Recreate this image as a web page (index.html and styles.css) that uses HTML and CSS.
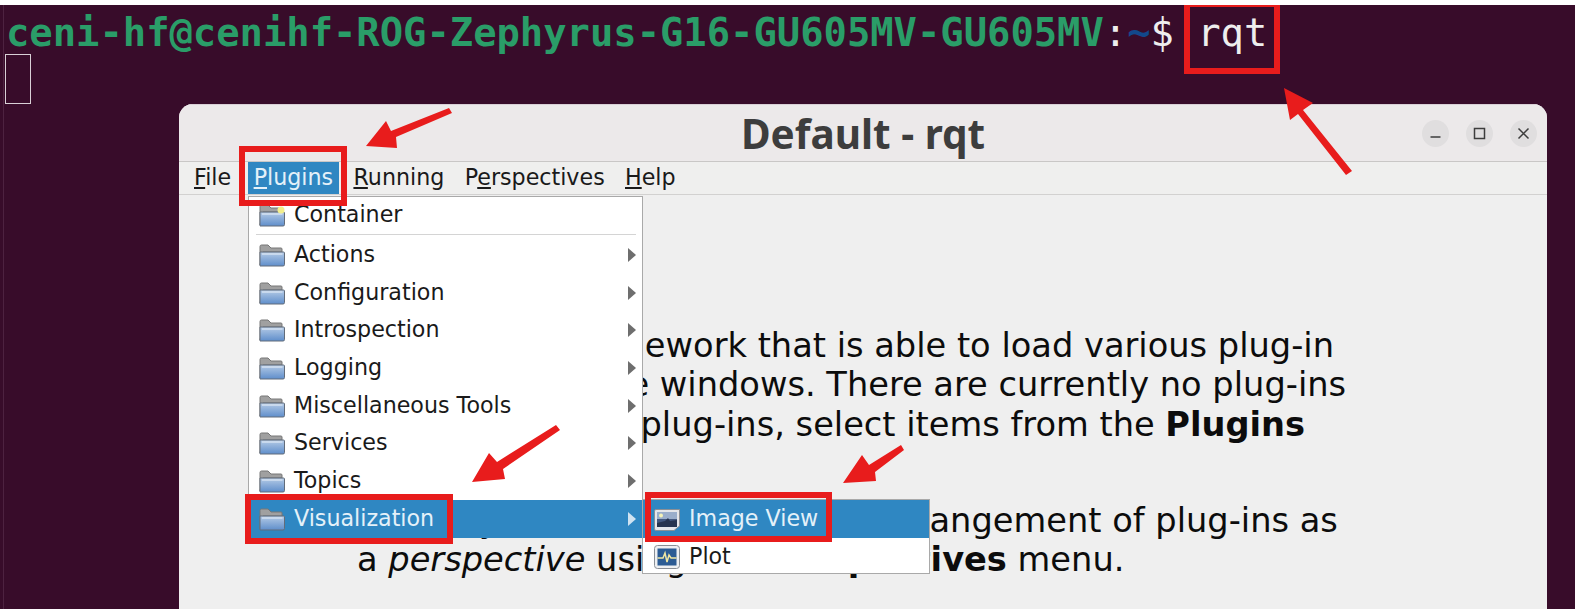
FILE: index.html
```html
<!DOCTYPE html>
<html lang="en">
<head>
<meta charset="utf-8">
<title>Default - rqt</title>
<link rel="stylesheet" href="styles.css">
</head>
<body>
<svg class="defs" width="0" height="0" aria-hidden="true">
  <defs>
    <linearGradient id="fb" x1="0" y1="0" x2="0" y2="1"><stop offset="0" stop-color="#b5cbe6"/><stop offset="1" stop-color="#5f8ecb"/></linearGradient>
    <symbol id="folder" viewBox="0 0 26 24">
      <path d="M1 22V3.500Q1 2 2.500 2H9L12 5H22Q23 5 23 6V9H4Z" fill="#a0a0a0" stroke="#777777"/>
      <path d="M1 23V9H24.500Q25.500 9 25.500 10V21.500Q25.500 23 24 23Z" fill="url(#fb)" stroke="#626c7a"/>
      <path d="M3 11H23.500" stroke="#d3e1f1" stroke-width="1.500"/>
    </symbol>
  </defs>
</svg>
<main class="screen">
  <div class="strip"></div>
  <section class="terminal">
    <div class="prompt"><span class="user">ceni-hf@cenihf-ROG-Zephyrus-G16-GU605MV-GU605MV</span><span class="colon">:</span><span class="tilde">~</span><span class="colon">$ rqt</span></div>
    <div class="cursor"></div>
  </section>

  <section class="window">
    <header class="titlebar">
      <h1 class="title">Default - rqt</h1>
      <div class="controls">
        <span class="ctl"><svg viewBox="0 0 27 27" width="27" height="27"><path d="M8.500 17H18.500" stroke="#3d3d3d" stroke-width="1.500"/></svg></span>
        <span class="ctl"><svg viewBox="0 0 27 27" width="27" height="27"><rect x="8.500" y="8.500" width="10" height="10" fill="none" stroke="#3d3d3d" stroke-width="1.500"/></svg></span>
        <span class="ctl"><svg viewBox="0 0 27 27" width="27" height="27"><path d="M8.500 8.500L18.500 18.500M18.500 8.500L8.500 18.500" stroke="#3d3d3d" stroke-width="1.500"/></svg></span>
      </div>
    </header>
    <nav class="menubar">
      <span class="mb-item"><u>F</u>ile</span>
      <span class="mb-item active"><u>P</u>lugins</span>
      <span class="mb-item"><u>R</u>unning</span>
      <span class="mb-item">P<u>e</u>rspectives</span>
      <span class="mb-item"><u>H</u>elp</span>
    </nav>
    <div class="content">
      <p class="para">Rqt is a GUI framework that is able to load various plug-in<br>tools as dockable windows. There are currently no plug-ins<br>selected. To add plug-ins, select items from the <b>Plugins</b><br>menu.</p>
      <p class="para">You may also save a particular arrangement of plug-ins as<br>a <i>perspective</i> using the <b>Perspectives</b> menu.</p>
    </div>
  </section>

  <div class="menu main-menu">
    <div class="item first"><svg class="ico"><use href="#folder"/></svg><span class="label">Container</span><svg class="star" viewBox="0 0 8 8" width="8" height="8"><circle cx="4" cy="4" r="3.500" fill="#f3ef8c"/></svg></div>
    <div class="sep"></div>
    <div class="item"><svg class="ico"><use href="#folder"/></svg><span class="label">Actions</span><span class="tri"></span></div>
    <div class="item"><svg class="ico"><use href="#folder"/></svg><span class="label">Configuration</span><span class="tri"></span></div>
    <div class="item"><svg class="ico"><use href="#folder"/></svg><span class="label">Introspection</span><span class="tri"></span></div>
    <div class="item"><svg class="ico"><use href="#folder"/></svg><span class="label">Logging</span><span class="tri"></span></div>
    <div class="item"><svg class="ico"><use href="#folder"/></svg><span class="label">Miscellaneous Tools</span><span class="tri"></span></div>
    <div class="item"><svg class="ico"><use href="#folder"/></svg><span class="label">Services</span><span class="tri"></span></div>
    <div class="item"><svg class="ico"><use href="#folder"/></svg><span class="label">Topics</span><span class="tri"></span></div>
    <div class="item hot"><svg class="ico"><use href="#folder"/></svg><span class="label">Visualization</span><span class="tri"></span></div>
  </div>

  <div class="menu sub-menu">
    <div class="item hot"><svg class="ico-sq" viewBox="0 0 28 26">
      <path d="M1.500 5Q1.500 3.500 3 3.500H26.500V20L21 24.500H3Q1.500 24.500 1.500 23Z" fill="#e4e6ea" stroke="#8a8f96"/>
      <rect x="4" y="6" width="20" height="15" fill="#43587f"/>
      <rect x="4" y="6" width="20" height="7" fill="#9aaecb"/>
      <circle cx="8" cy="9.500" r="2" fill="#f4f2b8"/>
      <path d="M4 17L12 15L15 12L17 15L24 14V21H4Z" fill="#27344f"/>
    </svg><span class="label">Image View</span></div>
    <div class="item"><svg class="ico-sq" viewBox="0 0 28 26">
      <rect x="1.500" y="1.500" width="25" height="23" rx="3" fill="#eef0f2" stroke="#8a8f96"/>
      <rect x="4.500" y="4.500" width="19" height="17" fill="#2c5c94"/>
      <path d="M4.500 14H10L12 9L14 18L16 11L18 14H23.500" fill="none" stroke="#f1e7a2" stroke-width="1.500"/>
    </svg><span class="label">Plot</span></div>
  </div>

  <div class="mark mark-rqt"></div>
  <div class="mark mark-plugins"></div>
  <div class="mark mark-vis"></div>
  <div class="mark mark-image"></div>

  <svg class="arrows" width="1575" height="609" viewBox="0 0 1575 609" aria-hidden="true">
    <g fill="#e81c1c" stroke="none">
      <path d="M1284 88L1313 103L1303 110L1352 171L1346 175L1298 114L1290 120Z"/>
      <path d="M366 146L386 121L391 131L449 108L452 113L396 137L397 148Z"/>
      <path d="M472 482L489 453L497 462L556 425L560 430L503 469L505 479Z"/>
      <path d="M843 483L862 455L869 465L901 445L904 450L875 472L876 481Z"/>
    </g>
  </svg>
</main>
</body>
</html>
```
FILE: styles.css
```css
html, body {
  margin: 0;
  padding: 0;
  width: 1575px;
  height: 609px;
  overflow: hidden;
  background: #ffffff;
}
.defs { position: absolute; }
.screen {
  position: relative;
  width: 1575px;
  height: 604px;
  margin-top: 5px;
  background: #380c2a;
  overflow: hidden;
  font-family: "DejaVu Sans", sans-serif;
}
.strip {
  position: absolute;
  left: 3px;
  top: 0;
  bottom: 0;
  width: 1px;
  background: #4d2240;
}
.terminal {
  padding: 6px 0 0 6px;
}
.prompt {
  font-family: "DejaVu Sans Mono", monospace;
  font-size: 38.8px;
  line-height: 43px;
  white-space: pre;
  color: #f2f2f2;
}
.user {
  color: #2a9d68;
  font-weight: 700;
}
.colon { color: #eeeeee; }
.tilde { color: #12488b; font-weight: 700; }
.cursor {
  box-sizing: border-box;
  width: 26px;
  height: 50px;
  border: 1px solid #d8d0d6;
  margin-left: -1px;
}

.window {
  position: absolute;
  left: 179px;
  top: 99px;
  width: 1368px;
  height: 510px;
  border-radius: 14px 14px 0 0;
  background: #efefef;
  overflow: hidden;
  display: flex;
  flex-direction: column;
}
.titlebar {
  position: relative;
  flex: none;
  height: 57px;
  display: flex;
  align-items: center;
  justify-content: center;
  background: #ece9ea;
  border-top: 1px solid #d9cfd6;
  box-sizing: border-box;
}
.title {
  margin: 0;
  font-family: "Noto Sans", sans-serif;
  font-size: 40.5px;
  font-weight: 700;
  color: #3d3d3d;
}
.controls {
  position: absolute;
  right: 10px;
  top: 15px;
  display: flex;
  gap: 17px;
}
.ctl {
  width: 27px;
  height: 27px;
  border-radius: 50%;
  background: #e0dedf;
  display: block;
}
.ctl svg { display: block; }
.menubar {
  flex: none;
  height: 34px;
  box-sizing: border-box;
  border-top: 1px solid #c9c7c6;
  border-bottom: 1px solid #d2d1d0;
  background: #efefee;
  display: flex;
  gap: 8.3px;
  padding-left: 9px;
  font-size: 22.2px;
  color: #1a1a1a;
}
.mb-item {
  padding: 0 6px;
  line-height: 31px;
  white-space: nowrap;
}
.mb-item.active {
  margin-left: 2.2px;
  background: #2f87c2;
  color: #e4f1f9;
}
.content {
  padding: 131px 0 0 178px;
  font-size: 33.65px;
  line-height: 39.3px;
  color: #0c0c0c;
}
.para {
  margin: 0 0 18px;
  white-space: nowrap;
}

.menu {
  position: absolute;
  box-sizing: border-box;
  background: #ffffff;
  border: 1px solid #a9a9a9;
  font-size: 22.2px;
  color: #1a1a1a;
}
.main-menu {
  left: 248px;
  top: 191px;
  width: 395px;
  height: 342px;
}
.sub-menu {
  left: 642px;
  top: 494px;
  width: 288px;
  height: 75px;
}
.item {
  position: relative;
  height: 37.7px;
  display: flex;
  align-items: center;
  padding-left: 10px;
  white-space: nowrap;
}
.label {
  position: relative;
  top: -1px;
}
.item.first { height: 36px; }
.item.hot {
  background: #2f87c2;
  color: #e4f1f9;
}
.ico {
  flex: none;
  width: 26px;
  height: 24px;
  margin-right: 9px;
}
.ico-sq {
  flex: none;
  width: 28px;
  height: 26px;
  margin-right: 8px;
}
.star {
  position: absolute;
  left: 28px;
  top: 9px;
}
.tri {
  position: absolute;
  right: 6px;
  top: 50%;
  margin-top: -7px;
  width: 0;
  height: 0;
  border-left: 8px solid #6e6e6e;
  border-top: 7px solid transparent;
  border-bottom: 7px solid transparent;
}
.hot .tri { border-left-color: #cfe3f1; }
.sep {
  height: 1px;
  margin: 1px 6px 1px 7px;
  background: #d4d4d4;
}

.mark {
  position: absolute;
  box-sizing: border-box;
  border: 6px solid #e81c1c;
}
.mark-rqt { left: 1184px; top: -4px; width: 96px; height: 73px; }
.mark-plugins { left: 239px; top: 141px; width: 108px; height: 60px; }
.mark-vis { left: 245px; top: 489px; width: 208px; height: 50px; }
.mark-image { left: 645px; top: 487px; width: 187px; height: 50px; }
.arrows {
  position: absolute;
  left: 0;
  top: -5px;
  pointer-events: none;
}
```
